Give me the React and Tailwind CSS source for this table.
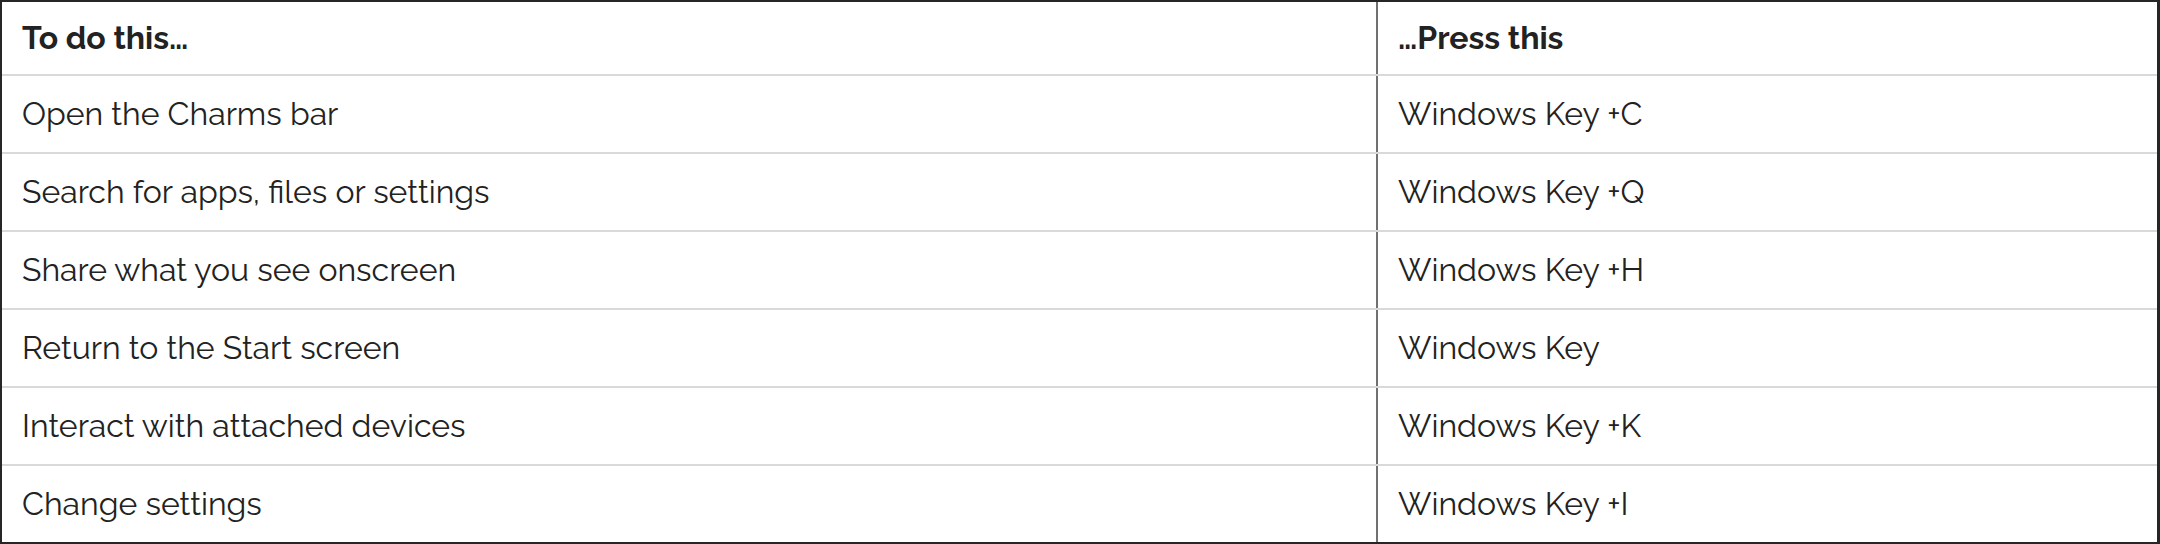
import React from 'react';

const rows = [
  ['Open the Charms bar', 'Windows Key +C'],
  ['Search for apps, files or settings', 'Windows Key +Q'],
  ['Share what you see onscreen', 'Windows Key +H'],
  ['Return to the Start screen', 'Windows Key'],
  ['Interact with attached devices', 'Windows Key +K'],
  ['Change settings', 'Windows Key +I'],
];

export default function App() {
  return (
    <div className="w-[2160px] h-[544px] bg-white text-[#222] font-['Raleway','Lato',sans-serif]">
      <div className="h-full border-2 border-r-[3px] border-[#262626] flex flex-col">
        {/* Header */}
        <div className="flex h-[74px] border-b-2 border-[#d9d9d9] font-bold text-[32px]">
          <div className="w-[1376px] flex items-center pl-5 border-r-2 border-[#707070]">To do this…</div>
          <div className="flex-1 flex items-center pl-5">…Press this</div>
        </div>

        {rows.map(([action, keys], i) => (
          <div
            key={i}
            className={`flex text-[32px] ${i < rows.length - 1 ? 'h-[78px] border-b-2 border-[#d9d9d9]' : 'h-[76px]'}`}
          >
            <div className="w-[1376px] flex items-center pl-5 border-r-2 border-[#707070]">{action}</div>
            <div className="flex-1 flex items-center pl-5">{keys}</div>
          </div>
        ))}
      </div>
    </div>
  );
}
